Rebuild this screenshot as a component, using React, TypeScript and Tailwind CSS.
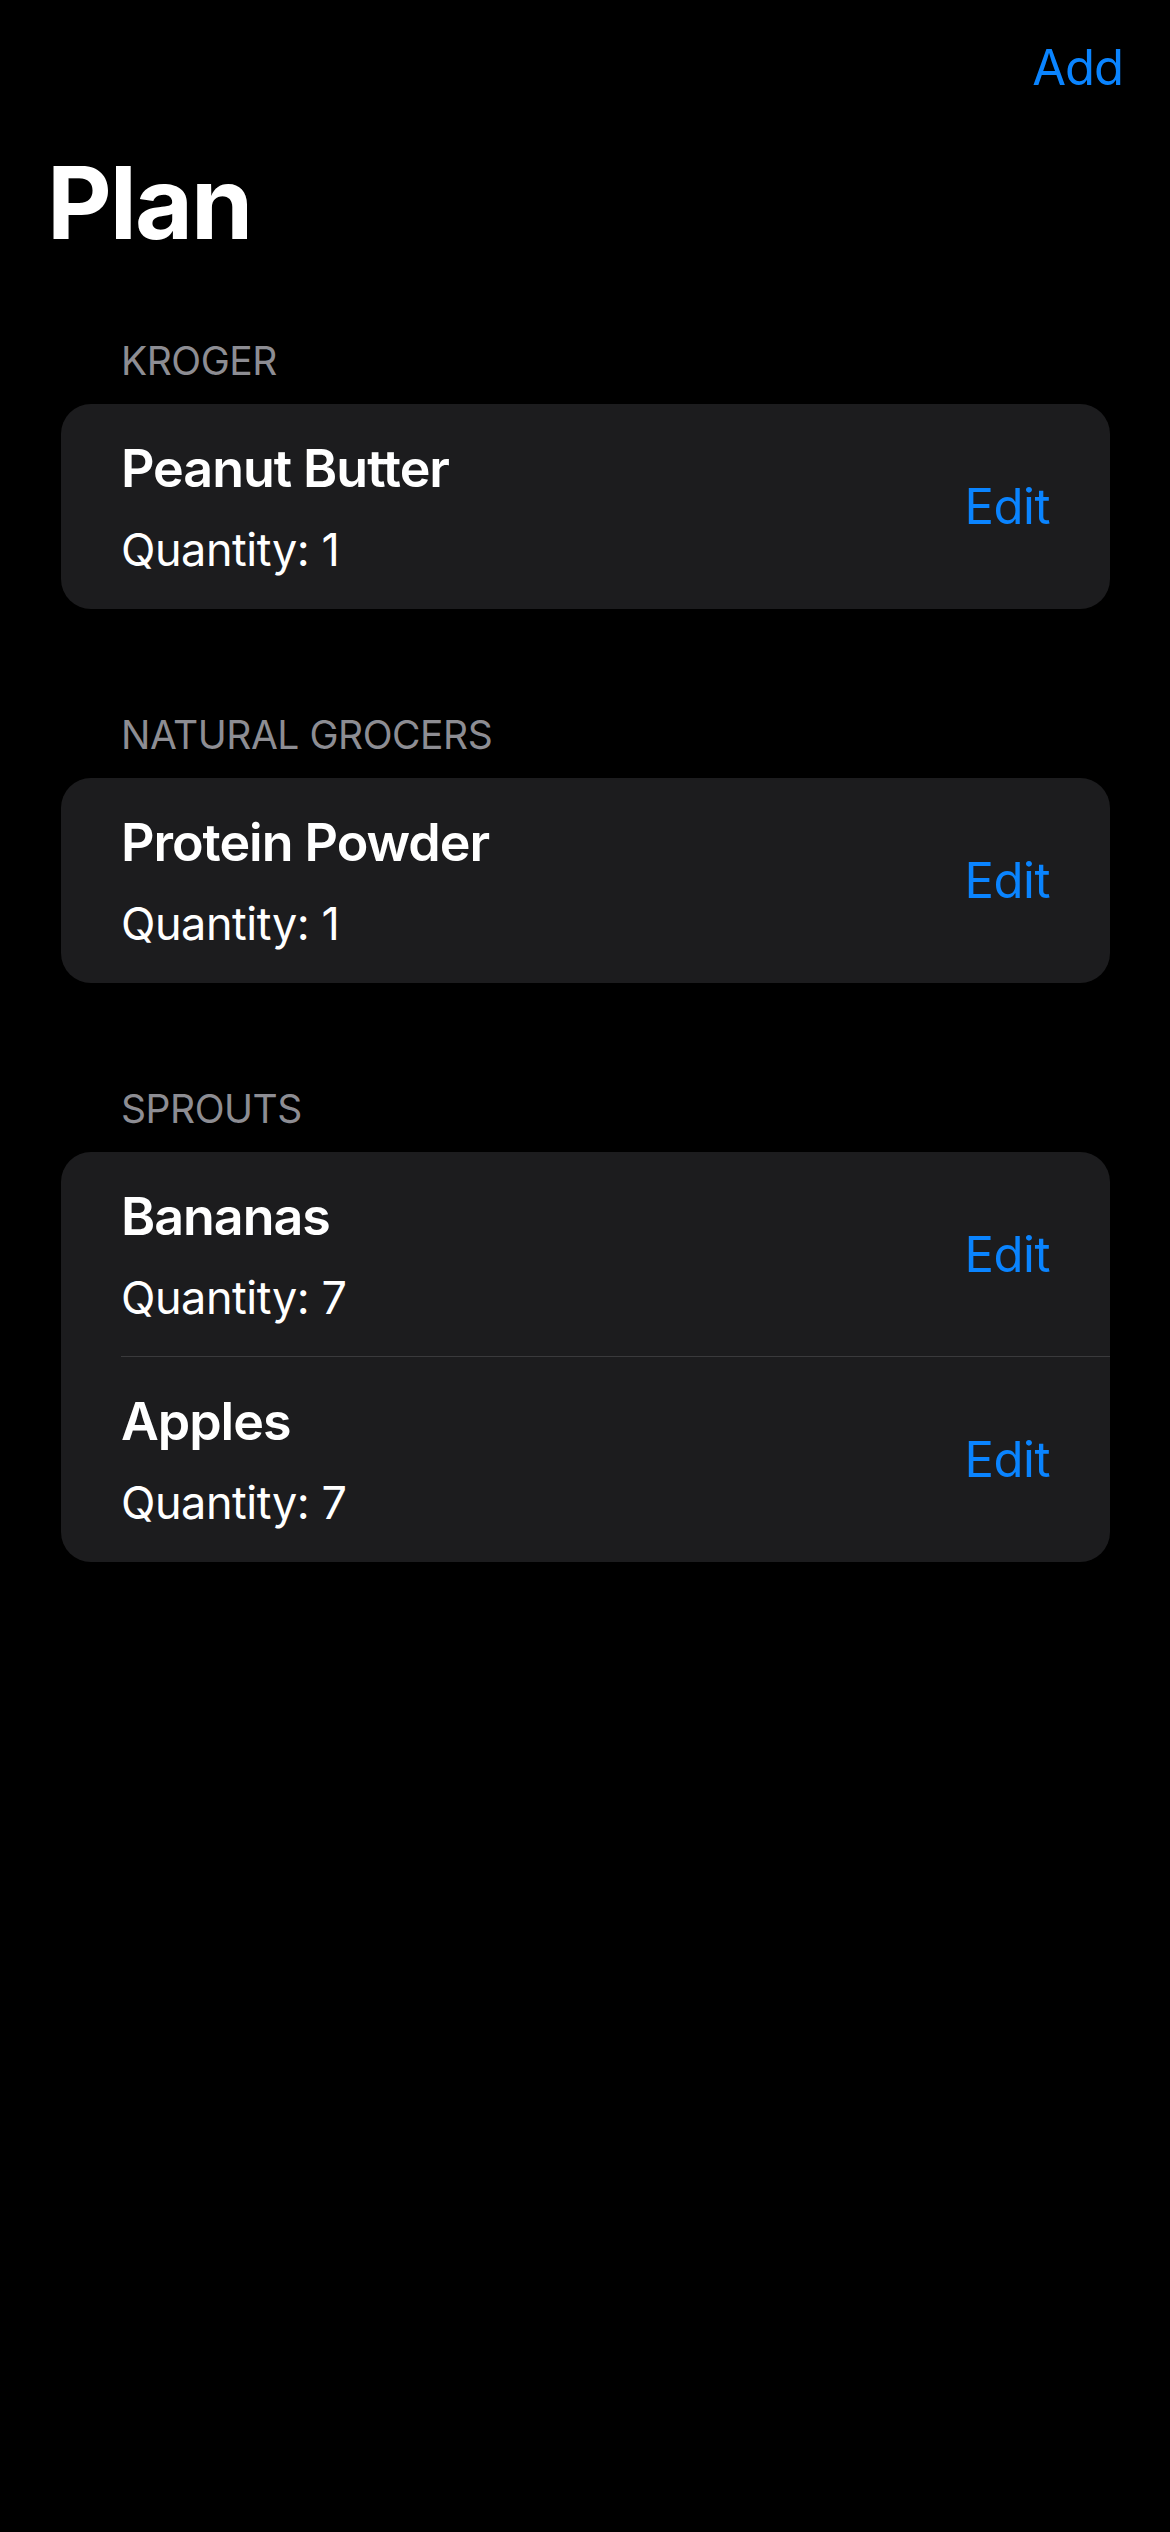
import React from "react";

interface Item {
  name: string;
  quantity: number;
}

interface Store {
  name: string;
  items: Item[];
}

const stores: Store[] = [
  { name: "Kroger", items: [{ name: "Peanut Butter", quantity: 1 }] },
  { name: "Natural Grocers", items: [{ name: "Protein Powder", quantity: 1 }] },
  {
    name: "Sprouts",
    items: [
      { name: "Bananas", quantity: 7 },
      { name: "Apples", quantity: 7 },
    ],
  },
];

function ItemRow({ item, last }: { item: Item; last: boolean }) {
  return (
    <div
      className={`flex h-[205px] items-center justify-between pr-[60px] ${
        last ? "" : "border-b border-[#3a3a3c]"
      }`}
    >
      <div className="flex h-full flex-col pt-[39px]">
        <p className="text-[52px] leading-[52px] font-semibold tracking-[-0.02em] text-white">
          {item.name}
        </p>
        <p className="mt-[32px] text-[45px] leading-[45px] tracking-[-0.01em] text-white">
          Quantity: {item.quantity}
        </p>
      </div>

      <button className="bg-transparent text-[49px] leading-[49px] tracking-[-0.01em] text-[#0a84ff]">
        Edit
      </button>
    </div>
  );
}

function StoreSection({ store }: { store: Store }) {
  return (
    <section className="flex flex-col">
      <h3 className="pl-[60px] text-[39px] leading-[39px] uppercase tracking-[-0.012em] text-[#8d8d93]">
        {store.name}
      </h3>

      <div className="mt-[24px] overflow-hidden rounded-[30px] bg-[#1c1c1e] pl-[60px]">
        {store.items.map((item, i) => (
          <ItemRow key={item.name} item={item} last={i === store.items.length - 1} />
        ))}
      </div>
    </section>
  );
}

export default function App() {
  return (
    <div className="h-[2532px] w-[1170px] bg-black font-['Inter',sans-serif]">
      <header className="flex justify-end pt-[42px] pr-[47px]">
        <button className="bg-transparent text-[49px] leading-[51px] tracking-[-0.02em] text-[#0a84ff]">
          Add
        </button>
      </header>

      <h1 className="mt-[59px] pl-[47px] text-[100px] leading-[102px] font-bold tracking-[-0.02em] text-white">
        Plan
      </h1>

      <main className="mt-[87px] flex flex-col gap-[106px] pl-[61px] pr-[60px]">
        {stores.map((store) => (
          <StoreSection key={store.name} store={store} />
        ))}
      </main>
    </div>
  );
}
